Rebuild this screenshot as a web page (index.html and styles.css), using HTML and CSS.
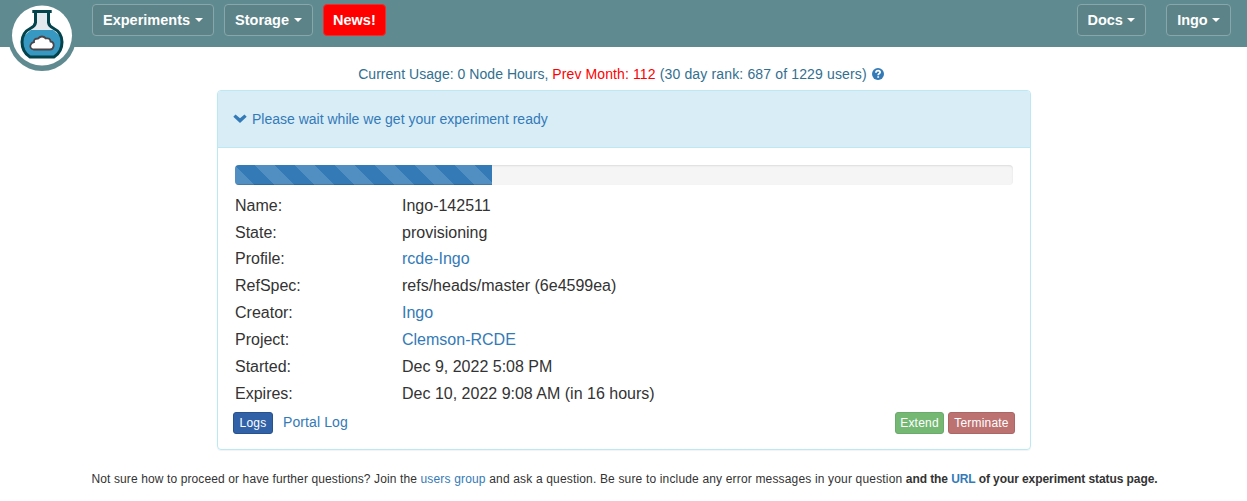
FILE: index.html
```html
<!DOCTYPE html>
<html lang="en">
<head>
<meta charset="utf-8">
<title>Experiment Status</title>
<link rel="stylesheet" href="styles.css">
</head>
<body>
<header class="navbar">
  <a class="logo" href="#">
    <svg width="68" height="72" viewBox="0 0 68 72">
      <circle cx="34" cy="37" r="34" fill="#5f8b90"/>
      <circle cx="34" cy="35.5" r="30" fill="#fff"/>
      <path d="M28 12H40V25Q41 28 45 30Q54 36 54 43Q54 52 46 57H22Q14 52 14 43Q14 36 23 30Q27 28 28 25Z" fill="#e2eaef"/>
      <path d="M23 30H45Q54 36 54 43Q54 52 46 57H22Q14 52 14 43Q14 36 23 30Z" fill="#3799c2"/>
      <path d="M24.300 11.500H43.700M27.500 12V22.500Q27 26 23 28C17 31 14 36 14 42Q14 52 22 57H46Q54 52 54 42C54 36 51 31 45 28Q41 26 40.500 22.500V12" fill="none" stroke="#03434c" stroke-width="3"/>
      <path d="M25.500 49.500Q21.500 48.500 22.500 45Q23.500 42.500 26 42Q25.500 38.500 30 38.500Q34 34.500 38 38.500Q42 37.500 42.500 41.500Q46 42 45.700 46Q45 49.500 42 49.500Z" fill="#fff" stroke="#4b4549" stroke-width="1.800"/>
    </svg>
  </a>
  <nav class="nav-left">
    <a class="nav-btn" href="#">Experiments <i class="caret"></i></a>
    <a class="nav-btn" href="#">Storage <i class="caret"></i></a>
    <a class="nav-btn news" href="#">News!</a>
  </nav>
  <nav class="nav-right">
    <a class="nav-btn" href="#">Docs <i class="caret"></i></a>
    <a class="nav-btn" href="#">Ingo <i class="caret"></i></a>
  </nav>
</header>
<main>
  <p class="usage"><span><span class="current">Current Usage: 0 Node Hours, </span><span class="prev">Prev Month: 112</span> (30 day rank: 687 of 1229 users)</span>
    <svg class="help" width="12" height="12" viewBox="0 0 12 12"><circle cx="6" cy="6" r="6" fill="#337ab7"/><path d="M3.900 4.700Q3.900 2.700 6.100 2.700Q8.100 2.700 8.100 4.300Q8.100 5.300 7 5.800Q6.200 6.200 6.200 7.200M6.200 8.200V9.800" fill="none" stroke="#fff" stroke-width="1.800"/></svg>
  </p>
  <section class="panel">
    <div class="panel-heading">
      <svg width="14" height="9" viewBox="0 0 14 9"><path d="M0.300 2.700L2.500 0.500L7 4.200L11.500 0.500L13.700 2.700L7 9Z" fill="#337ab7"/></svg>
      <a href="#">Please wait while we get your experiment ready</a>
    </div>
    <div class="panel-body">
      <div class="progress"><div class="progress-bar" style="width: 33%"></div></div>
      <dl class="details">
        <dt>Name:</dt><dd>Ingo-142511</dd>
        <dt>State:</dt><dd>provisioning</dd>
        <dt>Profile:</dt><dd><a href="#">rcde-Ingo</a></dd>
        <dt>RefSpec:</dt><dd>refs/heads/master (6e4599ea)</dd>
        <dt>Creator:</dt><dd><a href="#">Ingo</a></dd>
        <dt>Project:</dt><dd><a href="#">Clemson-RCDE</a></dd>
        <dt>Started:</dt><dd>Dec 9, 2022 5:08 PM</dd>
        <dt>Expires:</dt><dd>Dec 10, 2022 9:08 AM (in 16 hours)</dd>
      </dl>
      <div class="actions">
        <button class="btn logs">Logs</button>
        <a class="portal" href="#">Portal Log</a>
        <button class="btn extend">Extend</button>
        <button class="btn terminate">Terminate</button>
      </div>
    </div>
  </section>
  <p class="note"><span class="lead">Not sure how to proceed or have further questions? Join the </span><a href="#">users group</a> and ask a question. Be sure to include any error messages in your question <b>and the <a href="#">URL</a> of your experiment status page.</b></p>
</main>
</body>
</html>
```
FILE: styles.css
```css
* { box-sizing: border-box; }
body {
  margin: 0;
  background: #fff;
  color: #333;
  font: 14px/20px "Liberation Sans", Arial, sans-serif;
}
a { color: #337ab7; text-decoration: none; }
.navbar {
  display: flex;
  height: 47px;
  padding: 4px 16px 0 8px;
  background: #5f8b90;
}
.logo { width: 68px; height: 72px; margin-top: -4px; }
.logo svg { display: block; }
.nav-left { display: flex; gap: 10px; margin-left: 16px; }
.nav-right { display: flex; gap: 20px; margin-left: auto; }
.nav-btn {
  display: flex;
  align-items: center;
  height: 32px;
  padding: 0 10px;
  border: 1px solid #88a7aa;
  border-radius: 4px;
  background: #5b8388;
  color: #fff;
  font-weight: bold;
  font-size: 14.500px;
}
.nav-right .nav-btn { padding: 0 10.500px 0 10px; letter-spacing: -.080px; }
.news { background: #f00; border-color: #e8302f; padding: 0 9px; }
.caret {
  margin-left: 5px;
  border-top: 4px solid #fff;
  border-left: 4px solid transparent;
  border-right: 4px solid transparent;
}
.nav-right .caret { margin-left: 4px; }
.usage {
  display: flex;
  justify-content: center;
  align-items: center;
  gap: 5px;
  height: 20px;
  margin: 17px 5px 6px 0;
  color: #31708f;
  letter-spacing: .150px;
}
.current { letter-spacing: .040px; }
.prev { color: #f00; letter-spacing: .110px; }
.panel {
  width: 814px;
  height: 360px;
  margin: 0 auto 0 217px;
  border: 1px solid #bce8f1;
  border-radius: 4px;
  box-shadow: 0 1px 1px rgba(0, 0, 0, .05);
}
.panel-heading {
  display: flex;
  align-items: center;
  gap: 5px;
  height: 57px;
  padding-left: 15px;
  border-bottom: 1px solid #bce8f1;
  border-radius: 3px 3px 0 0;
  background: #d9edf7;
}
.panel-heading svg { margin: -2px .500px 0 -.500px; }
.panel-body { padding: 17px 15px 0; }
.progress {
  height: 20px;
  margin: 0 2px 6.700px;
  overflow: hidden;
  border-radius: 4px;
  background: #f5f5f5;
  box-shadow: inset 0 1px 2px rgba(0, 0, 0, .1);
}
.progress-bar {
  height: 100%;
  background: #337ab7 linear-gradient(45deg, rgba(255, 255, 255, .15) 25%, transparent 25%, transparent 50%, rgba(255, 255, 255, .15) 50%, rgba(255, 255, 255, .15) 75%, transparent 75%) 20px 0 / 40px 40px;
  box-shadow: inset 0 -1px 0 rgba(0, 0, 0, .15);
}
.details {
  display: grid;
  grid-template-columns: 167px 1fr;
  grid-auto-rows: 26.860px;
  margin: 0 2px;
  font-size: 16px;
  line-height: 27px;
}
.details dd { margin: 0; }
.actions { display: flex; height: 22px; margin-top: 5.400px; }
.btn {
  height: 22px;
  padding: 0;
  border: 1px solid;
  border-radius: 3px;
  color: #fff;
  font: 12px/18px "Liberation Sans", Arial, sans-serif;
  letter-spacing: .200px;
}
.logs { width: 40px; background: #3162a8; border-color: #28528d; }
.portal { margin-left: 10px; letter-spacing: .100px; }
.extend { width: 49px; margin-left: auto; margin-right: 4px; background: #74b874; border-color: #6aaa6a; }
.terminate { width: 67px; background: #bd7272; border-color: #ad6666; }
.note {
  margin: 19px 0 0 2px;
  font-size: 12px;
  letter-spacing: .165px;
  text-align: center;
  white-space: nowrap;
}
.note .lead { letter-spacing: .115px; }
.note b { letter-spacing: -.080px; }
```
